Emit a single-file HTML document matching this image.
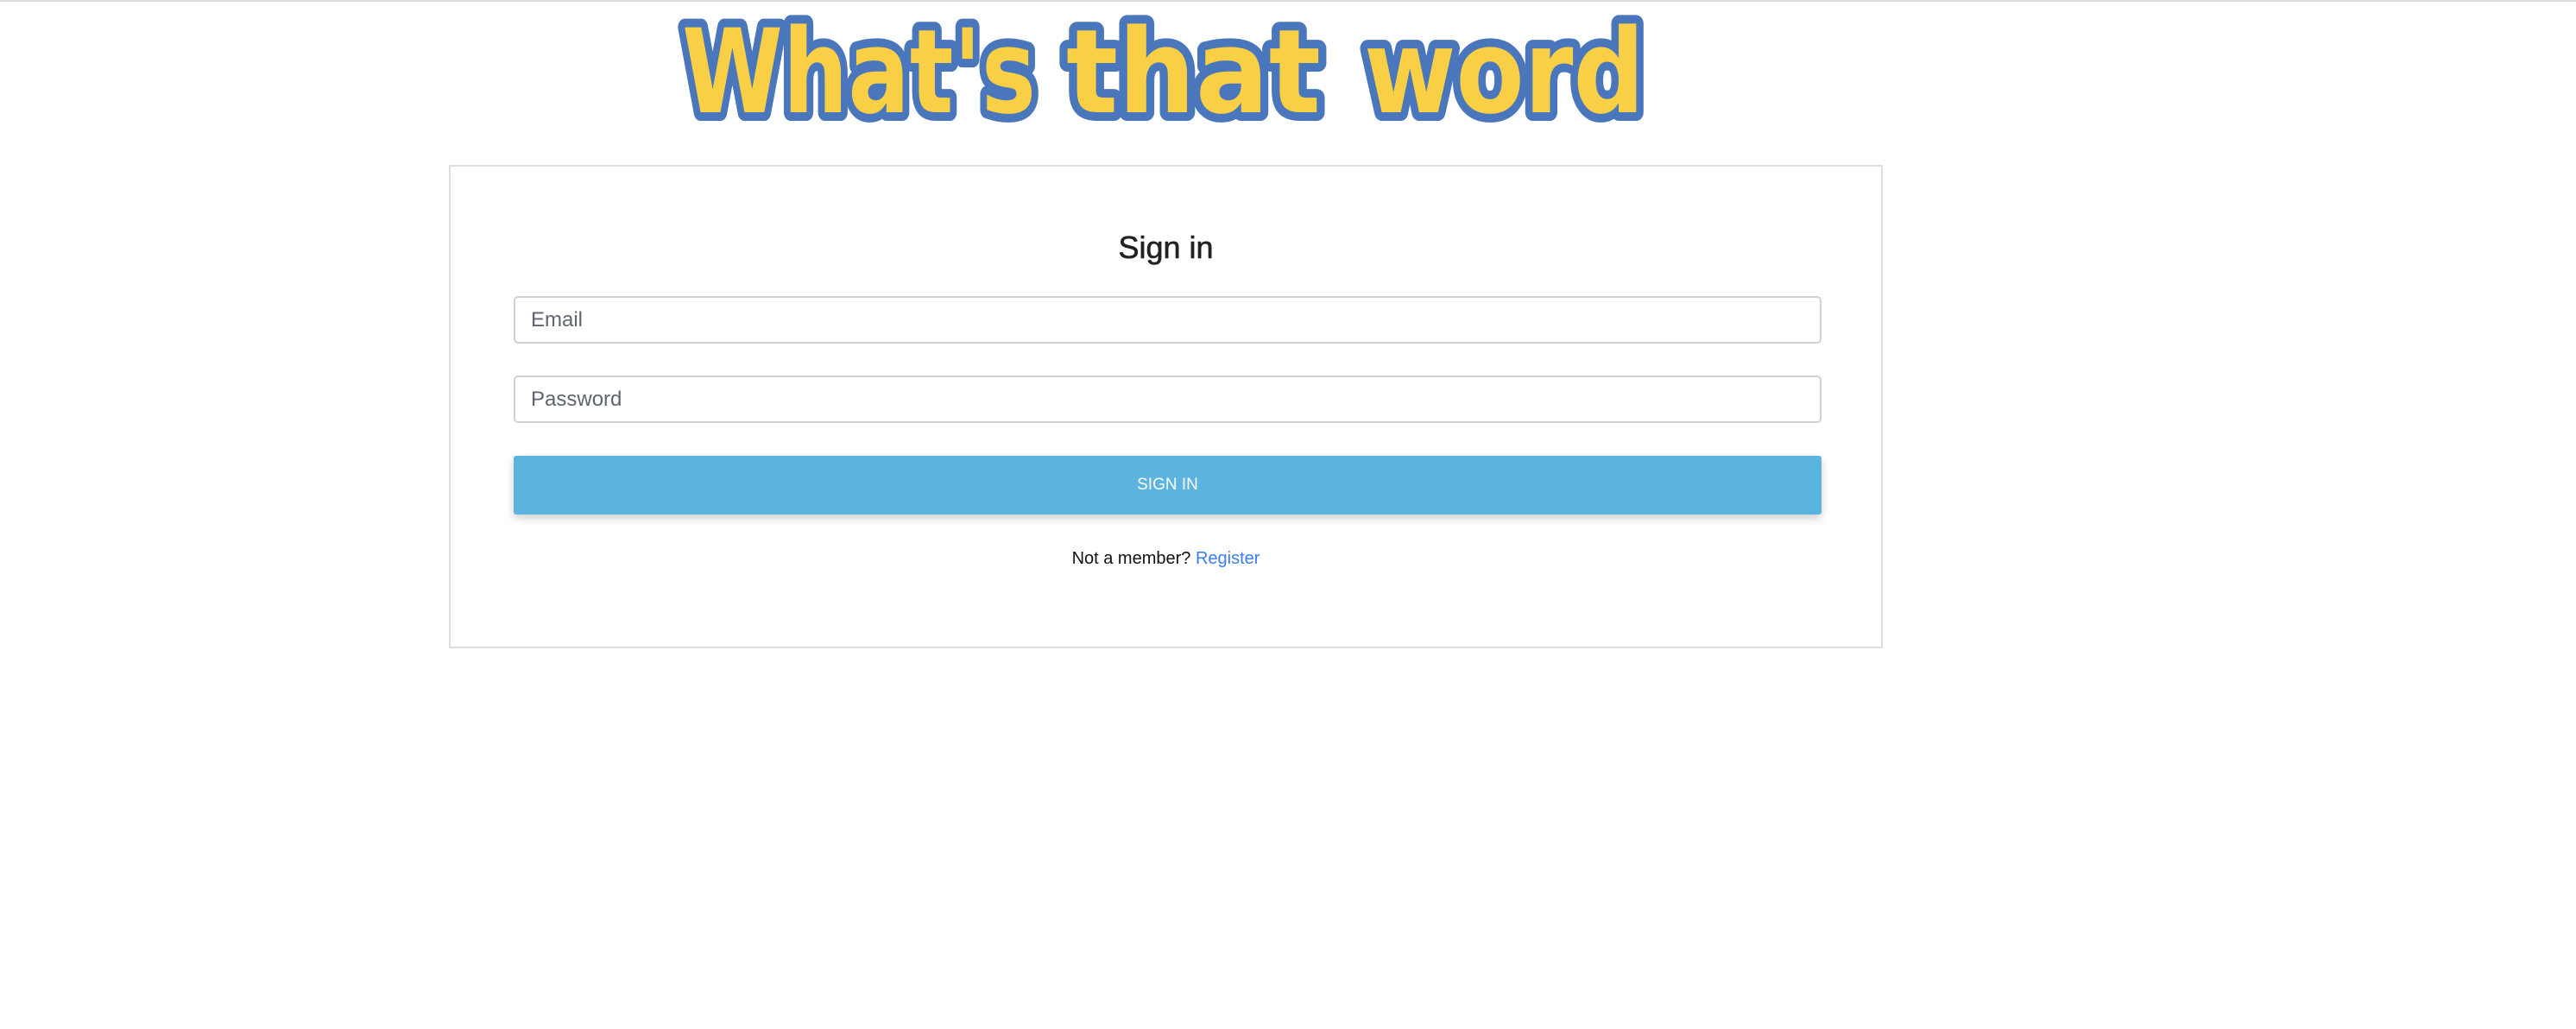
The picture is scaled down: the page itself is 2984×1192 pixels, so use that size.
<!DOCTYPE html>
<html><head><meta charset="utf-8"><style>
html,body{margin:0;padding:0;background:#fff;width:2984px;height:1192px;overflow:hidden;font-family:"Liberation Sans",Arial,sans-serif}
.topline{position:absolute;left:0;top:0;width:2984px;height:2px;background:#dcdcdf}
.card{position:absolute;left:520px;top:191px;width:1661px;height:560px;border:2px solid #dedede;box-sizing:border-box}
h1{position:absolute;left:520px;width:1661px;top:262px;margin:0;text-align:center;font-size:36px;font-weight:normal;color:#222;line-height:50px;-webkit-text-stroke:0.6px #222}
.inp{position:absolute;left:595px;width:1515px;height:55px;border:2px solid #ced1d6;border-radius:5px;box-sizing:border-box;color:#5e6570;font-size:24px;line-height:51px;padding-left:18px}
.btn{position:absolute;left:595px;top:528px;width:1515px;height:68px;background:#5bb3e0;border-radius:3px;box-shadow:0 4px 10px rgba(0,0,0,.2);color:#fff;text-align:center;font-size:19px;line-height:68px}
.note{position:absolute;left:520px;width:1661px;top:632px;text-align:center;font-size:20px;color:#111;line-height:30px}
.note span{color:#3b7bf6}
</style></head><body>
<div class="topline"></div>
<svg style="position:absolute;left:0;top:0" width="2984" height="180">
<g font-family="DejaVu Sans, sans-serif" font-weight="bold" font-size="135" fill="#f8cf45" stroke="#4a76bb" stroke-width="20" stroke-linejoin="round" style="paint-order:stroke">
<text x="790" y="130" textLength="410" lengthAdjust="spacingAndGlyphs">What's</text>
<text x="1235" y="130" textLength="295" lengthAdjust="spacingAndGlyphs">that</text>
<text x="1580" y="130" textLength="325" lengthAdjust="spacingAndGlyphs">word</text>
</g></svg>
<div class="card"></div>
<h1>Sign in</h1>
<div class="inp" style="top:343px">Email</div>
<div class="inp" style="top:435px">Password</div>
<div class="btn">SIGN IN</div>
<div class="note">Not a member? <span>Register</span></div>
</body></html>
